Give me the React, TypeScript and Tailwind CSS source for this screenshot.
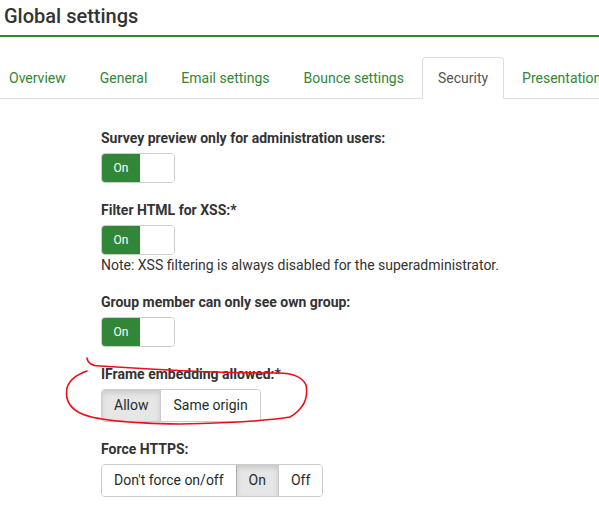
import React from 'react';

const tabs = ['Overview', 'General', 'Email settings', 'Bounce settings', 'Security', 'Presentation', 'Language'];

function Toggle() {
  return (
    <div className="flex h-[30px] w-[74px] overflow-hidden rounded-[4px] border border-[#ccc]">
      <div className="flex w-[38px] items-center justify-center bg-[#328637] text-[12px] text-white">On</div>
      <div className="flex-1 bg-white" />
    </div>
  );
}

function ButtonGroup({ options, active }: { options: string[]; active: string }) {
  return (
    <div className="inline-flex overflow-hidden rounded-[4px] border border-[#ccc]">
      {options.map((opt, i) => (
        <div
          key={opt}
          className={
            'flex h-[31px] items-center px-[12px] text-[14px] text-[#1e2d2d] ' +
            (i > 0 ? 'border-l ' : '') +
            (opt === active
              ? 'border-[#adadad] bg-[#e6e6e6] shadow-[inset_0_3px_5px_rgba(0,0,0,0.125)]'
              : 'border-[#ccc] bg-white')
          }
        >
          {opt}
        </div>
      ))}
    </div>
  );
}

function Field({ label, children }: { label: string; children: React.ReactNode }) {
  return (
    <div className="mb-[17px]">
      <div className="mb-[5px] text-[14px] font-bold leading-[20px] text-[#333]">{label}</div>
      {children}
    </div>
  );
}

export default function App() {
  return (
    <div className="relative h-[521px] w-[599px] overflow-hidden bg-white" style={{ fontFamily: 'Roboto, "Liberation Sans", sans-serif' }}>
      <div className="border-b-2 border-[#328637] px-[4px] pb-[6px] pt-[3px]">
        <h1 className="text-[20px] font-medium leading-[26px] text-[#333]">Global settings</h1>
      </div>

      <div className="mt-[20px] flex whitespace-nowrap border-b border-[#ddd]">
        <div className="-ml-[7px] flex gap-[2px]">
          {tabs.map((t) => (
            <div
              key={t}
              className={
                '-mb-px rounded-t-[4px] border px-[15px] py-[10px] text-[14px] leading-[20px] ' +
                (t === 'Security'
                  ? 'border-[#ddd] border-b-white bg-white text-[#555]'
                  : 'border-transparent text-[#328637]')
              }
            >
              {t}
            </div>
          ))}
        </div>
      </div>

      <div className="pl-[101px] pt-[29px]">
        <Field label="Survey preview only for administration users:">
          <Toggle />
        </Field>
        <Field label="Filter HTML for XSS:*">
          <Toggle />
          <div className="text-[14px] leading-[20px] text-[#333]">
            Note: XSS filtering is always disabled for the superadministrator.
          </div>
        </Field>
        <Field label="Group member can only see own group:">
          <Toggle />
        </Field>
        <Field label="IFrame embedding allowed:*">
          <ButtonGroup options={['Allow', 'Same origin']} active="Allow" />
        </Field>
        <Field label="Force HTTPS:">
          <ButtonGroup options={["Don't force on/off", 'On', 'Off']} active="On" />
        </Field>
      </div>

      {/* hand-drawn annotation */}
      <svg className="pointer-events-none absolute inset-0" width="599" height="521" viewBox="0 0 599 521">
        <path
          d="M87,358 Q88,366 100,366 L150,369 Q220,373 275,373 Q300,372 306,385 Q310,405 290,417 Q250,423 180,424 Q100,423 80,413 Q64,405 67,388 Q70,377 87,371"
          fill="none"
          stroke="#e8101a"
          strokeWidth="1.6"
          strokeLinecap="round"
        />
      </svg>
    </div>
  );
}
